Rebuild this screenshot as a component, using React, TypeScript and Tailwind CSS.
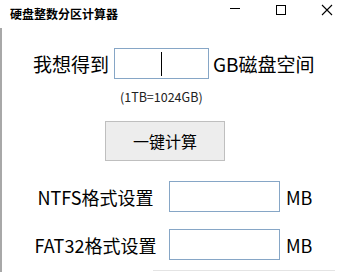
import React from 'react';

const font = { fontFamily: '"Noto Sans CJK SC", "Noto Sans", sans-serif' };

function Field({ caret }: { caret?: boolean }) {
    return (
        <div className="flex items-center justify-center w-full h-full border border-[#86a6c6] bg-white">
            {caret && <div className="w-px h-[24px] bg-black" />}
        </div>
    );
}

export default function App() {
    return (
        <div className="w-[350px] h-[272px] bg-white overflow-hidden flex flex-col text-black" style={font}>
            {/* Title bar */}
            <div className="h-[28px] flex items-center shrink-0">
                <span className="pl-[10px] text-[12px] font-bold leading-none">硬盘整数分区计算器</span>
                <div className="ml-auto flex items-center h-full">
                    <div className="w-[46px] flex justify-center">
                        <div className="w-[10px] h-px bg-black mt-[-6px]" />
                    </div>
                    <div className="w-[46px] flex justify-center">
                        <div className="w-[10px] h-[10px] border border-black mt-[-8px]" />
                    </div>
                    <div className="w-[46px] flex justify-center">
                        <svg width="12" height="12" viewBox="0 0 12 12" className="mt-[-8px]">
                            <path d="M1 1L11 11M11 1L1 11" stroke="#000" strokeWidth="1.1" fill="none" />
                        </svg>
                    </div>
                </div>
            </div>

            {/* Body */}
            <div className="flex-1 border-l-2 border-[#a8a8a8] flex flex-col pt-[20px]">
                <div className="flex items-center h-[31px] pl-[31px]">
                    <span className="text-[19px] leading-none">我想得到</span>
                    <div className="w-[95px] h-[31px] ml-[5px]">
                        <Field caret />
                    </div>
                    <span className="text-[19px] leading-none ml-[4px]">GB磁盘空间</span>
                </div>

                <div className="pl-[118px] mt-[10px] text-[12.5px] leading-[16px] text-[#222]">(1TB=1024GB)</div>

                <div className="pl-[103px] mt-[16px]">
                    <button className="w-[120px] h-[40px] bg-[#ededed] border border-[#bfbfbf] text-[16px] leading-none flex items-center justify-center">
                        一键计算
                    </button>
                </div>

                <div className="flex items-center h-[31px] mt-[20px]">
                    <span className="w-[167px] pl-[20px] text-center text-[18px] leading-none">NTFS格式设置</span>
                    <div className="w-[111px] h-[31px]">
                        <Field />
                    </div>
                    <span className="text-[18px] leading-none ml-[6px]">MB</span>
                </div>

                <div className="flex items-center h-[31px] mt-[17px]">
                    <span className="w-[167px] pl-[20px] text-center text-[18px] leading-none">FAT32格式设置</span>
                    <div className="w-[111px] h-[31px]">
                        <Field />
                    </div>
                    <span className="text-[18px] leading-none ml-[6px]">MB</span>
                </div>

                <div className="mt-[10px] ml-[151px] mr-[15px] h-px bg-[#e4e4e4]" />
            </div>
        </div>
    );
}
